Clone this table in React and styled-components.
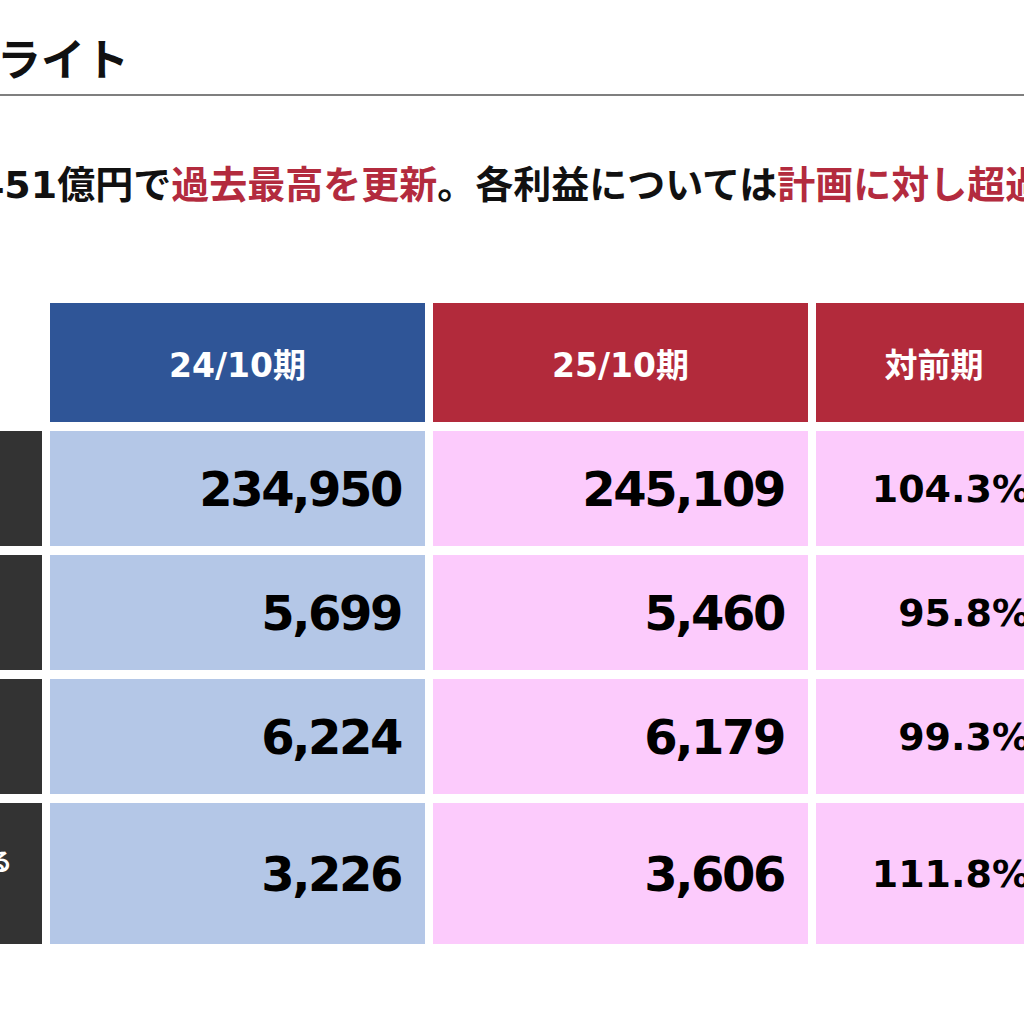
import React from "react";
import styled, { createGlobalStyle } from "styled-components";

const GlobalStyle = createGlobalStyle`
  html, body {
    margin: 0;
    padding: 0;
    background: #ffffff;
    overflow: hidden;
  }
  body {
    width: 1024px;
    height: 1024px;
    font-family: "Noto Sans CJK JP", "Noto Sans", sans-serif;
  }
`;

const Viewport = styled.div`
  width: 1024px;
  height: 1024px;
  overflow: hidden;
`;

const Slide = styled.div`
  margin-left: -258px;
  width: 1400px;
  display: flex;
  flex-direction: column;
`;

const TitleBar = styled.header`
  padding: 30px 0 10px 80px;
  border-bottom: 2px solid #7f7f7f;
`;

const Title = styled.h1`
  margin: 0;
  font-family: "Noto Sans CJK JP", sans-serif;
  font-weight: 700;
  font-size: 44px;
  line-height: 54px;
  color: #111;
`;

const Lead = styled.p`
  margin: 64px 0 0;
  padding-left: 43px;
  white-space: nowrap;
  font-family: "DejaVu Sans", "Noto Sans CJK JP", sans-serif;
  font-weight: 700;
  font-size: 38px;
  line-height: 50px;
  color: #111;
`;

const Accent = styled.span`
  color: #b32b3e;
`;

const Table = styled.div`
  margin-top: 93px;
  display: grid;
  grid-template-columns: 300px 375px 375px 236px;
  grid-template-rows: 119px 115px 115px 115px 141px;
  column-gap: 8px;
  row-gap: 9px;
`;

const Blank = styled.div``;

const HeadCell = styled.div`
  display: flex;
  align-items: center;
  justify-content: center;
  background: ${(p) => (p.$tone === "blue" ? "#2f5597" : "#b22a3b")};
  color: #ffffff;
  font-family: "DejaVu Sans", "Noto Sans CJK JP", sans-serif;
  font-weight: 700;
  font-size: 33px;
`;

const LabelCell = styled.div`
  display: flex;
  align-items: center;
  justify-content: center;
  padding: 0 20px;
  background: #333333;
  color: #ffffff;
  text-align: center;
  font-family: "Noto Sans CJK JP", sans-serif;
  font-weight: 700;
  font-size: 24px;
  line-height: 29px;
`;

const ValueCell = styled.div`
  display: flex;
  align-items: center;
  justify-content: flex-end;
  padding-right: ${(p) => (p.$pct ? "22px" : "24px")};
  background: ${(p) => (p.$tone === "blue" ? "#b4c7e7" : "#fccbfc")};
  color: #000000;
  font-family: "DejaVu Sans", sans-serif;
  font-weight: 700;
  font-size: ${(p) => (p.$pct ? "38px" : "48px")};
  letter-spacing: ${(p) => (p.$pct ? "0" : "-2.4px")};
`;

const rows = [
  { label: "売上高", prev: "234,950", cur: "245,109", pct: "104.3%" },
  { label: "営業利益", prev: "5,699", cur: "5,460", pct: "95.8%" },
  { label: "経常利益", prev: "6,224", cur: "6,179", pct: "99.3%" },
  {
    label: (
      <>
        親会社株主に帰属する
        <br />
        当期純利益
      </>
    ),
    prev: "3,226",
    cur: "3,606",
    pct: "111.8%",
  },
];

export default function App() {
  return (
    <Viewport>
      <GlobalStyle />
      <Slide>
        <TitleBar>
          <Title>決算ハイライト</Title>
        </TitleBar>
        <Lead>
          売上高は2,451億円で<Accent>過去最高を更新</Accent>。各利益については
          <Accent>計画に対し超過</Accent>
        </Lead>
        <Table>
          <Blank />
          <HeadCell $tone="blue">24/10期</HeadCell>
          <HeadCell $tone="red">25/10期</HeadCell>
          <HeadCell $tone="red">対前期</HeadCell>
          {rows.map((r, i) => (
            <React.Fragment key={i}>
              <LabelCell>{r.label}</LabelCell>
              <ValueCell $tone="blue">{r.prev}</ValueCell>
              <ValueCell $tone="pink">{r.cur}</ValueCell>
              <ValueCell $tone="pink" $pct>
                {r.pct}
              </ValueCell>
            </React.Fragment>
          ))}
        </Table>
      </Slide>
    </Viewport>
  );
}
